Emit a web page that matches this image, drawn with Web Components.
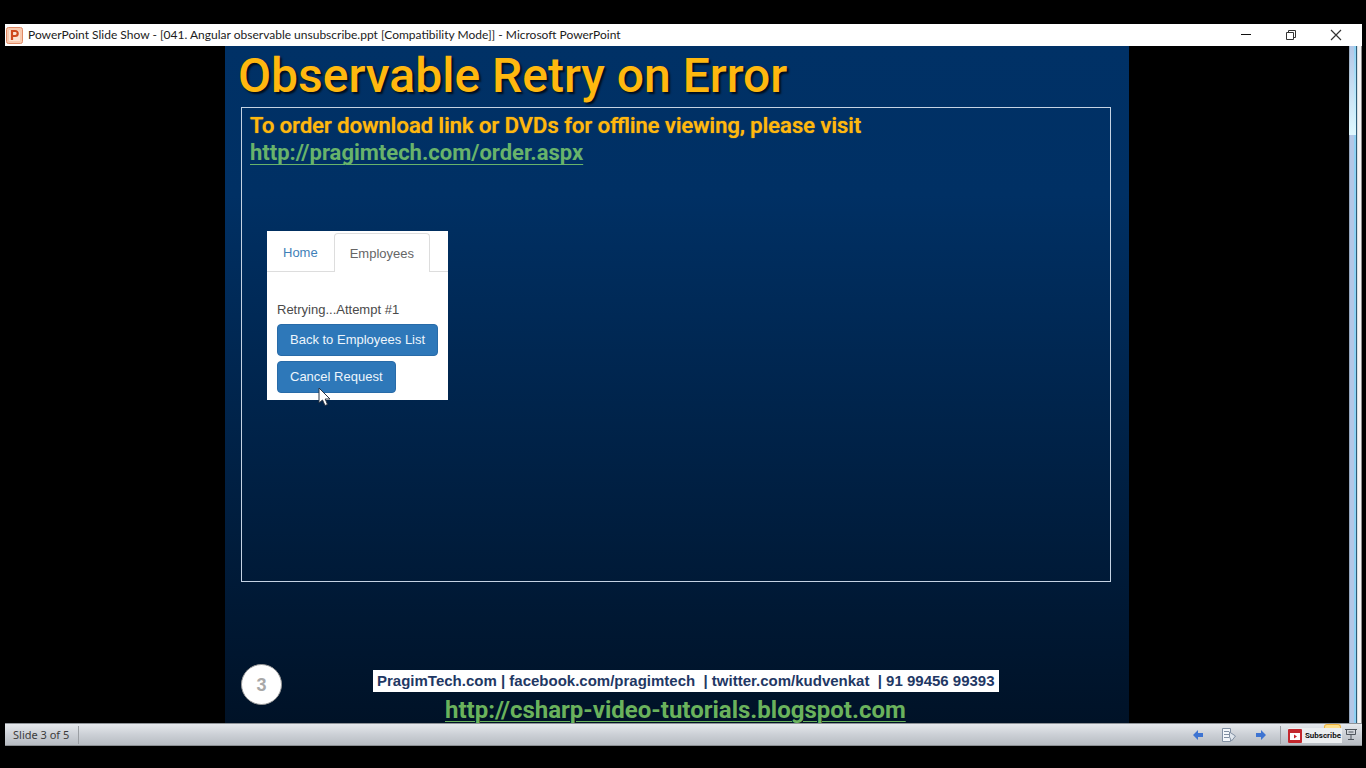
<!DOCTYPE html>
<html lang="en">
<head>
<meta charset="utf-8">
<title>PowerPoint Slide Show</title>
<style>
html,body{margin:0;height:100%;background:#000}
body{font-family:"Liberation Sans",Arial,sans-serif}
</style>
</head>
<body>
<slide-show-window>
  <title-bar slot="title">PowerPoint Slide Show - [041. Angular observable unsubscribe.ppt [Compatibility Mode]] - Microsoft PowerPoint</title-bar>
  <slide-page heading="Observable Retry on Error" number="3">
    <order-note></order-note>
    <app-capture></app-capture>
    <slide-credits slot="credits"></slide-credits>
  </slide-page>
  <status-bar slot="status">Slide 3 of 5</status-bar>
</slide-show-window>
<script>
class Base extends HTMLElement{
  constructor(){super();this.attachShadow({mode:'open'});}
  connectedCallback(){this.shadowRoot.innerHTML=this.view();}
}
customElements.define('slide-show-window',class extends Base{view(){return `
<style>
:host{display:flex;box-sizing:border-box;height:100vh;padding:24px 4px 22px 5px;background:#000}
.win{flex:1;display:flex;flex-direction:column;min-width:0}
.stage{flex:1;display:flex;min-height:0}
main{flex:1;display:flex;justify-content:center;min-width:0}
.edge{width:13px;background:linear-gradient(90deg,#93a5bd 0 1px,#b3c7e6 1px 5px,#8fd2f4 5px 7px,#2d5c78 7px 8px,#d9dde0 8px 9px,#f4f4f4 9px 12px,#8c8c8c 12px)}
.edge i{display:block;height:89px;width:7px;background:linear-gradient(#fff0,#dff8ff)}
</style>
<div class="win"><slot name="title"></slot><div class="stage"><main><slot></slot></main><div class="edge"><i></i></div></div><slot name="status"></slot></div>`;}});
customElements.define('title-bar',class extends Base{view(){return `
<style>
:host{display:flex;align-items:center;height:22px;flex:none;background:#fff;color:#1c1c1c;font:12px/20px Lato,"Noto Sans",sans-serif;padding-left:1px}
.t{flex:1;margin-left:5px;white-space:nowrap;overflow:hidden}
button{width:45px;height:20px;padding:0;border:0;background:none;display:grid;place-items:center}
svg{display:block}
nav{display:flex;padding-right:4px}
</style>
<svg width="17" height="17" viewBox="0 0 17 17"><rect x=".5" y=".5" width="16" height="16" rx="2" fill="#f8c9ae" stroke="#e08a66"/><path d="M3 3h9l2 2v9H3z" fill="#fbe3d2"/><path d="M6 13V4h3.2a2.4 2.4 0 0 1 0 5H6" fill="none" stroke="#cf4a1c" stroke-width="2.2"/></svg>
<span class="t"><slot></slot></span>
<nav>
<button aria-label="Minimize"><svg width="12" height="12"><path d="M1 5.500h10" stroke="#111"/></svg></button>
<button aria-label="Restore"><svg width="12" height="12" fill="none" stroke="#333"><path d="M1.500 3.500h7v7h-7zM3.500 3.500v-2h7v7h-2"/></svg></button>
<button aria-label="Close"><svg width="12" height="12"><path d="M1 1l10 10M11 1L1 11" stroke="#333" stroke-width="1.200"/></svg></button>
</nav>`;}});
customElements.define('slide-page',class extends Base{view(){return `
<style>
:host{display:flex;flex-direction:column;box-sizing:border-box;height:100%;aspect-ratio:904/677;padding:0 18px 0 16px;background:linear-gradient(#003166,#003064 22%,#001227)}
h1{margin:0;height:61px;flex:none;padding:0;font:500 48px/60px Roboto,sans-serif;color:#ffb80f;text-shadow:2px 2px 2px #000b;white-space:nowrap;text-indent:-3px}
section{flex:1;border:1px solid #c5d3e3;padding:4px 8px}
footer{display:flex;height:141px;box-sizing:border-box;flex:none;padding-top:82px}
b{box-sizing:border-box;width:41px;height:41px;border-radius:50%;background:#fff;border:1px solid #999;font:bold 18px/40px "Liberation Sans",sans-serif;color:#a8a8a8;text-align:center}
</style>
<h1>${this.getAttribute('heading')}</h1><section><slot></slot></section><footer><b>${this.getAttribute('number')}</b><slot name="credits"></slot></footer>`;}});
customElements.define('order-note',class extends Base{view(){return `
<style>
:host{display:block;font:bold 22px/27px Roboto,sans-serif;color:#ffb80f;white-space:nowrap}
p{margin:0;font-weight:500;text-shadow:0 0 1px #ffb80f}
a{color:#68b36b;text-decoration-thickness:1px;text-underline-offset:4px}
</style>
<p>To order download link or DVDs for offline viewing, please visit</p><a href="#">http://pragimtech.com/order.aspx</a>`;}});
customElements.define('app-capture',class extends Base{view(){return `
<style>
:host{display:block;position:relative;box-sizing:border-box;width:181px;height:169px;margin:65px 0 0 17px;background:#fff;font:13px/20px "Liberation Sans",sans-serif;color:#4a4a4a}
nav{display:flex;height:41px}
a{box-sizing:border-box;text-decoration:none;color:#3f7fb8;line-height:39px;padding:2px 16px 0;border-bottom:1px solid #ddd}
a.on{color:#666;border:1px solid #ddd;border-bottom:0;border-radius:4px 4px 0 0;margin-top:2px;padding:0 15px}
nav:after{content:"";flex:1;border-bottom:1px solid #ddd}
p{margin:28px 10px 4px}
button{display:block;box-sizing:border-box;height:32px;margin:0 0 5px 10px;padding:0 12px;border:1px solid #286ba8;border-radius:4px;background:#2e78b9;color:#edf5fc;font:inherit;white-space:nowrap}
svg{position:absolute;left:51px;top:156px}
</style>
<nav><a href="#">Home</a><a href="#" class="on">Employees</a></nav>
<p>Retrying...Attempt #1</p><button>Back to Employees List</button><button>Cancel Request</button>
<svg width="14" height="20" viewBox="0 0 14 20"><path d="M1 1v15l3.500-3 2.500 5.500 2.500-1L7.200 12H12z" fill="#fff" stroke="#2b3443"/></svg>`;}});
customElements.define('slide-credits',class extends Base{view(){return `
<style>
:host{display:flex;flex-direction:column;align-items:flex-start;margin:6px 0 0 91px;white-space:nowrap}
p{margin:0;background:#fff;color:#1f3864;font:bold 15px/22px "Liberation Sans",sans-serif;padding:0 4px;white-space:pre}
a{margin:4px 0 0 72px;font:bold 24px/28px Roboto,sans-serif;color:#6ab25c;text-decoration-thickness:1px;text-underline-offset:3px}
</style>
<p>PragimTech.com | facebook.com/pragimtech  | twitter.com/kudvenkat  | 91 99456 99393</p><a href="#">http://csharp-video-tutorials.blogspot.com</a>`;}});
customElements.define('status-bar',class extends Base{view(){return `
<style>
:host{display:flex;align-items:center;box-sizing:border-box;height:23px;flex:none;background:linear-gradient(#e6e9ed,#ccd0d6 50%,#b7bcc2);border-top:1px solid #8f9499;border-bottom:1px solid #8a8e92;color:#3c3c3c;font:11px/18px "Noto Sans",sans-serif;padding:0 5px 0 8px}
.n{flex:1}.n span{border-right:1px solid #9a9ea3;padding-right:9px;display:inline-block}
button{padding:0;border:0;background:none;display:flex;align-items:center}
svg{display:block;flex:none}
.nav{display:flex;align-items:center;gap:18px;padding-right:14px;border-right:1px solid #9a9ea3;height:18px}
.views{display:flex;align-items:center;gap:3px;padding-left:7px}
.sub{position:relative;gap:3px;padding-right:1px;height:15px;margin-top:2px;background:#eceef0;color:#111;font:bold 8px/14px "Liberation Sans Narrow",Roboto,sans-serif}
.glow{position:absolute;right:1px;top:-4px;width:15px;height:3px;background:#ffe08a;border:1px solid #eeb33f;border-bottom:0;border-radius:3px 3px 0 0}
</style>
<div class="n"><span><slot></slot></span></div>
<div class="nav">
<button aria-label="Previous"><svg width="10" height="10"><path d="M5 0L0 5l5 5V7h5V3H5z" fill="#3e74d2"/></svg></button>
<button aria-label="Slide menu"><svg width="17" height="16" fill="#f4f7fb" stroke="#8290a3"><path d="M1.500 1.500h8v13h-8z"/><path d="M3 4.500h5M3 7.500h5M3 10.500h5"/><path d="M8.500 10V5l6 4-4 5z" fill="#dfe5ec"/></svg></button>
<button aria-label="Next"><svg width="10" height="10"><path d="M5 0l5 5-5 5V7H0V3h5z" fill="#3e74d2"/></svg></button>
</div>
<div class="views">
<button class="sub"><i class="glow"></i><svg width="14" height="14"><rect width="14" height="14" rx="1" fill="#c3272d"/><rect x="2" y="4" width="10" height="7" fill="#fff"/><path d="M6 5.500v4L9 7.500z" fill="#c3272d"/></svg>Subscribe</button>
<button aria-label="Slide show"><svg width="12" height="13" fill="none" stroke="#4f555c"><path d="M0 1.500h12M1.500 1.500v5h9v-5M6 6.500v5M3 11.500h6M3.500 4h5"/></svg></button>
</div>`;}});
</script>
</body>
</html>
